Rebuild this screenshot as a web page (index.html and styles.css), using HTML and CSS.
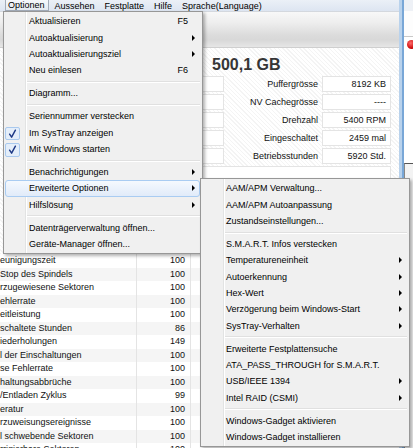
FILE: index.html
```html
<!DOCTYPE html>
<html>
<head>
<meta charset="utf-8">
<link rel="stylesheet" href="styles.css">
</head>
<body>
<div class="desk">
  <div class="win">
    <div class="menubar">
      <span class="mb-item open">Optionen</span>
      <span class="mb-item">Aussehen</span>
      <span class="mb-item">Festplatte</span>
      <span class="mb-item">Hilfe</span>
      <span class="mb-item">Sprache(Language)</span>
    </div>
    <div class="toolbar"></div>
    <div class="content">
      <div class="title">500,1 GB</div>
      <div class="info">
        <div class="lbl"></div><div class="box"></div><div class="lbl r">Puffergrösse</div><div class="box">8192 KB</div>
        <div class="lbl"></div><div class="box"></div><div class="lbl r">NV Cachegrösse</div><div class="box">----</div>
        <div class="lbl"></div><div class="box"></div><div class="lbl r">Drehzahl</div><div class="box">5400 RPM</div>
        <div class="lbl"></div><div class="box"></div><div class="lbl r">Eingeschaltet</div><div class="box">2459 mal</div>
        <div class="lbl"></div><div class="box"></div><div class="lbl r">Betriebsstunden</div><div class="box">5920 Std.</div>
        <div class="lbl"></div><div class="box wide"></div>
      </div>
      <div class="smart">
        <div class="row"><span class="name">eunigungszeit</span><span class="cur">100</span><span class="c3"></span></div>
        <div class="row"><span class="name">Stop des Spindels</span><span class="cur">100</span><span class="c3"></span></div>
        <div class="row"><span class="name">rzugewiesene Sektoren</span><span class="cur">100</span><span class="c3"></span></div>
        <div class="row"><span class="name">ehlerrate</span><span class="cur">100</span><span class="c3"></span></div>
        <div class="row"><span class="name">eitleistung</span><span class="cur">100</span><span class="c3"></span></div>
        <div class="row"><span class="name">schaltete Stunden</span><span class="cur">86</span><span class="c3"></span></div>
        <div class="row"><span class="name">iederholungen</span><span class="cur">149</span><span class="c3"></span></div>
        <div class="row"><span class="name">l der Einschaltungen</span><span class="cur">100</span><span class="c3"></span></div>
        <div class="row"><span class="name">se Fehlerrate</span><span class="cur">100</span><span class="c3"></span></div>
        <div class="row"><span class="name">haltungsabbrüche</span><span class="cur">100</span><span class="c3"></span></div>
        <div class="row"><span class="name">/Entladen Zyklus</span><span class="cur">99</span><span class="c3"></span></div>
        <div class="row"><span class="name">eratur</span><span class="cur">100</span><span class="c3"></span></div>
        <div class="row"><span class="name">rzuweisungsereignisse</span><span class="cur">100</span><span class="c3"></span></div>
        <div class="row"><span class="name">l schwebende Sektoren</span><span class="cur">100</span><span class="c3"></span></div>
        <div class="row"><span class="name">rrigierbare Sektoren</span><span class="cur">100</span><span class="c3"></span></div>
      </div>
    </div>
  </div>
  <div class="frame"></div>
  <div class="other">
    <div class="o-top"></div>
    <div class="o-head"></div>
    <div class="o-icon"></div>
    <div class="o-panel"></div>
  </div>
</div>

<div class="menu main">
  <div class="item"><span class="lab">Aktualisieren</span><span class="key">F5</span></div>
  <div class="item"><span class="lab">Autoaktualisierung</span><span class="arr"></span></div>
  <div class="item"><span class="lab">Autoaktualisierungsziel</span><span class="arr"></span></div>
  <div class="item"><span class="lab">Neu einlesen</span><span class="key">F6</span></div>
  <div class="sep"></div>
  <div class="item"><span class="lab">Diagramm...</span></div>
  <div class="sep"></div>
  <div class="item"><span class="lab">Seriennummer verstecken</span></div>
  <div class="item"><span class="chk"><svg width="13" height="12" viewBox="0 0 13 12"><path d="M3.6 6.2 L5.6 9.2 L9.4 2.2" fill="none" stroke="#1b3684" stroke-width="1.4" stroke-linecap="round" stroke-linejoin="round"/></svg></span><span class="lab">Im SysTray anzeigen</span></div>
  <div class="item"><span class="chk"><svg width="13" height="12" viewBox="0 0 13 12"><path d="M3.6 6.2 L5.6 9.2 L9.4 2.2" fill="none" stroke="#1b3684" stroke-width="1.4" stroke-linecap="round" stroke-linejoin="round"/></svg></span><span class="lab">Mit Windows starten</span></div>
  <div class="sep"></div>
  <div class="item"><span class="lab">Benachrichtigungen</span><span class="arr"></span></div>
  <div class="item hl"><span class="lab">Erweiterte Optionen</span><span class="arr"></span></div>
  <div class="item"><span class="lab">Hilfslösung</span><span class="arr"></span></div>
  <div class="sep"></div>
  <div class="item"><span class="lab">Datenträgerverwaltung öffnen...</span></div>
  <div class="item"><span class="lab">Geräte-Manager öffnen...</span></div>
</div>

<div class="menu sub">
  <div class="item"><span class="lab">AAM/APM Verwaltung...</span></div>
  <div class="item"><span class="lab">AAM/APM Autoanpassung</span></div>
  <div class="item"><span class="lab">Zustandseinstellungen...</span></div>
  <div class="sep"></div>
  <div class="item"><span class="lab">S.M.A.R.T. Infos verstecken</span></div>
  <div class="item"><span class="lab">Temperatureneinheit</span><span class="arr"></span></div>
  <div class="item"><span class="lab">Autoerkennung</span><span class="arr"></span></div>
  <div class="item"><span class="lab">Hex-Wert</span><span class="arr"></span></div>
  <div class="item"><span class="lab">Verzögerung beim Windows-Start</span><span class="arr"></span></div>
  <div class="item"><span class="lab">SysTray-Verhalten</span><span class="arr"></span></div>
  <div class="sep"></div>
  <div class="item"><span class="lab">Erweiterte Festplattensuche</span></div>
  <div class="item"><span class="lab">ATA_PASS_THROUGH for S.M.A.R.T.</span></div>
  <div class="item"><span class="lab">USB/IEEE 1394</span><span class="arr"></span></div>
  <div class="item"><span class="lab">Intel RAID (CSMI)</span><span class="arr"></span></div>
  <div class="sep"></div>
  <div class="item"><span class="lab">Windows-Gadget aktivieren</span></div>
  <div class="item"><span class="lab">Windows-Gadget installieren</span></div>
</div>
</body>
</html>
```

FILE: styles.css
```css
* { box-sizing: border-box; }
html, body { margin: 0; padding: 0; }
body {
  width: 413px;
  height: 448px;
  overflow: hidden;
  position: relative;
  font-family: "Liberation Sans", Arial, sans-serif;
  font-size: 9px;
  color: #000;
  background: #fff;
}

.desk { display: flex; height: 448px; }

.win {
  width: 399px;
  flex: none;
  display: flex;
  flex-direction: column;
  background: repeating-linear-gradient(45deg, #ffffff 0 2px, #f4f4f4 2px 3px);
}

.menubar {
  height: 11px;
  flex: none;
  display: flex;
  align-items: stretch;
  padding-left: 5px;
  background: linear-gradient(#ebf0f7, #dde5f1);
  white-space: nowrap;
  line-height: 10px;
}
.mb-item { display: flex; align-items: center; padding: 0 5px; }
.mb-item.open {
  padding: 0 3px 0 2px;
  margin-right: 1px;
  border: 1px solid #a3acb9;
  border-top: none;
  background: linear-gradient(#f6f8fb, #e4e9f0);
}

.toolbar {
  height: 37px;
  flex: none;
  border-top: 1px solid #d4d8de;
  border-bottom: 1px solid #cfcfcf;
  background: linear-gradient(#f8f8f8 0%, #eeeeee 30%, #dcdcdc 65%, #d8d8d8 80%, #e6e6e6 100%);
}

.content { flex: 1; }

.title {
  height: 28px;
  padding: 6px 0 0 212px;
  line-height: 21px;
  font-size: 16px;
  font-weight: bold;
  color: #363636;
  white-space: nowrap;
}

.info {
  display: grid;
  grid-template-columns: 120px 100px 90px 69px;
  grid-auto-rows: 16px;
  column-gap: 4px;
  row-gap: 2px;
}
.lbl { line-height: 16px; color: #111; white-space: nowrap; }
.lbl.r { text-align: right; }
.box {
  background: #fff;
  border: 1px solid #e4e4e4;
  text-align: right;
  padding-right: 4px;
  line-height: 14px;
  color: #111;
  white-space: nowrap;
}
.box.wide { grid-column: 2 / 5; }

.smart { margin-top: 72px; }
.row {
  display: grid;
  grid-template-columns: 137px 54px 1fr;
  height: 13.5px;
  line-height: 13.5px;
  background: #fff;
  color: #111;
  white-space: nowrap;
}
.row:nth-child(even) { background: #f5f5f5; }
.name { padding-left: 0; border-right: 1px solid #e4e4e4; overflow: hidden; }
.cur { text-align: right; padding-right: 5px; border-right: 1px solid #e4e4e4; }

.frame {
  width: 5px;
  flex: none;
  background: linear-gradient(to right, #b9d2ec 0 3px, #79a7d7 3px 5px);
}

.other { flex: 1; background: #fff; display: flex; flex-direction: column; }
.o-top { height: 11px; background: #eef1f6; }
.o-head { height: 26px; border-bottom: 1px solid #c9c9c9; background: #fdfdfd; }
.o-icon {
  width: 9px;
  height: 9px;
  margin: 3px 0 0 3px;
  border-radius: 50%;
  background: radial-gradient(circle at 40% 35%, #ff6a6a, #d01010 60%, #9a0000);
}
.o-panel {
  margin-top: 114px;
  flex: 1;
  border-top: 1px solid #555;
  border-left: 1px solid #888;
  background: #f3f3f3;
}

/* menus */
.menu {
  position: absolute;
  background-color: #f0f0f0;
  border: 1px solid #979797;
  box-shadow: 2px 2px 3px rgba(0, 0, 0, 0.3);
  white-space: nowrap;
}
.main {
  left: 3px;
  top: 11px;
  width: 200px;
  padding: 1px 2px 1px 1px;
  z-index: 1;
  background-image: linear-gradient(to right, transparent 21px, #e2e3e3 21px 22px, #ffffff 22px 23px, transparent 23px);
}
.sub {
  left: 200px;
  top: 178px;
  width: 210px;
  padding: 1px 2px 1px 1px;
  z-index: 2;
  background-image: linear-gradient(to right, transparent 22px, #e2e3e3 22px 23px, #ffffff 23px 24px, transparent 24px);
}

.item {
  position: relative;
  height: 16.35px;
  display: flex;
  align-items: center;
  padding-left: 23px;
  border: 1px solid transparent;
  border-radius: 3px;
}
.item .lab { flex: 1; }
.item .key { margin-right: 11px; }
.item .arr {
  width: 0;
  height: 0;
  border-left: 3px solid #000;
  border-top: 3px solid transparent;
  border-bottom: 3px solid transparent;
  margin-right: 4px;
}
.item.hl {
  border-color: #a9ccf2;
  background: linear-gradient(#f5f9fe, #e1ebf9);
}
.chk {
  position: absolute;
  left: -1px;
  top: 1.5px;
  width: 15px;
  height: 13.5px;
  border: 1px solid #a9c9ee;
  border-radius: 2px;
  background: #e4eefa;
  display: flex;
  align-items: center;
  justify-content: center;
}
.chk svg { display: block; }

.sep { height: 6.7px; position: relative; margin-left: 22px; }
.sub .sep { margin-left: 23px; }
.sep::after {
  content: "";
  position: absolute;
  left: 0;
  right: 0;
  top: 2.5px;
  height: 1px;
  background: #e0e0e0;
  border-bottom: 1px solid #ffffff;
  box-sizing: content-box;
}
```
